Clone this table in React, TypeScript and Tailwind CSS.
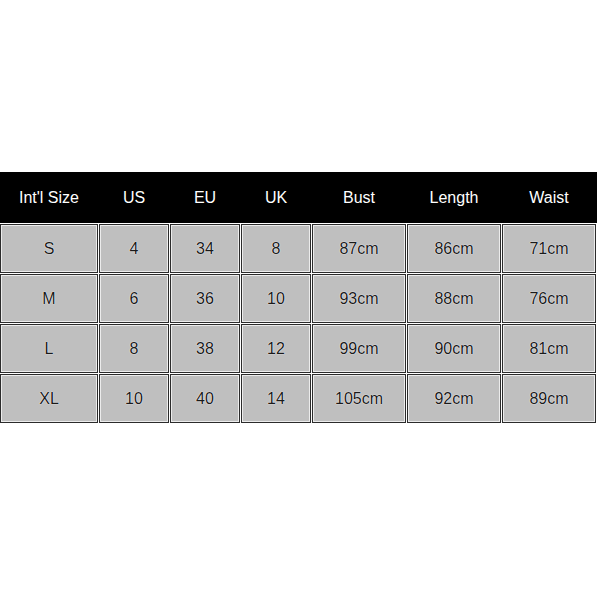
const headers = ["Int'l Size", "US", "EU", "UK", "Bust", "Length", "Waist"];

const rows = [
  ["S", "4", "34", "8", "87cm", "86cm", "71cm"],
  ["M", "6", "36", "10", "93cm", "88cm", "76cm"],
  ["L", "8", "38", "12", "99cm", "90cm", "81cm"],
  ["XL", "10", "40", "14", "105cm", "92cm", "89cm"],
];

const cols = "grid grid-cols-[98px_70px_70px_70px_94px_94px_94px] gap-x-px";

export default function App() {
  return (
    <div className="w-[600px] h-[600px] bg-white pt-[172px] font-['Liberation_Sans',Arial,sans-serif] text-[16px]">
      <div className="w-[597px]">
        {/* Header */}
        <div className={`${cols} bg-black h-[51px] items-center text-white`}>
          {headers.map((h) => (
            <div key={h} className="text-center">
              {h}
            </div>
          ))}
        </div>

        {/* Body */}
        <div className="flex flex-col gap-px pt-px bg-white">
          {rows.map((row) => (
            <div key={row[0]} className={`${cols} h-[49px]`}>
              {row.map((cell, i) => (
                <div
                  key={i}
                  className="flex items-center justify-center bg-[#bfbfbf] border border-[#2b2b2b] shadow-[inset_1px_1px_0_#ececec,inset_-1px_-1px_0_#ececec] text-[#1a1a1a] [text-shadow:0_0_1px_#fff,0_0_1px_#fff]"
                >
                  {cell}
                </div>
              ))}
            </div>
          ))}
        </div>
      </div>
    </div>
  );
}
